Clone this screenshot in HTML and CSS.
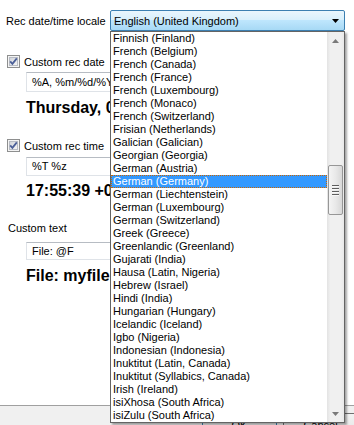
FILE: index.html
```html
<!DOCTYPE html>
<html lang="en">
<head>
    <meta charset="UTF-8">
    <meta name="viewport" content="width=device-width, initial-scale=1.0">
    <title>Recording options</title>
    <link rel="stylesheet" href="styles.css">
</head>
<body>
    <div class="dialog">
        <div class="content">
            <div class="locale-row">
                <span class="label">Rec date/time locale</span>
                <div class="combo">
                    <span class="combo-text">English (United Kingdom)</span>
                    <svg class="combo-arrow" width="7" height="4" viewBox="0 0 7 4"><path d="M0 0H7L3.5 4Z" fill="#000"/></svg>
                </div>
            </div>

            <label class="check-row first">
                <span class="checkbox">
                    <svg width="13" height="13" viewBox="0 0 13 13">
                        <defs>
                            <linearGradient id="cb1" x1="0" y1="0" x2="1" y2="1">
                                <stop offset="0" stop-color="#cfd3d9"/>
                                <stop offset="1" stop-color="#f7f7f7"/>
                            </linearGradient>
                        </defs>
                        <rect x="0.5" y="0.5" width="12" height="12" fill="#f4f4f4" stroke="#8e8f8f"/>
                        <rect x="2.5" y="2.5" width="8" height="8" fill="url(#cb1)" stroke="#b8bcc4"/>
                        <path d="M3.2 6.4L5.4 8.8L9.8 3.4" fill="none" stroke="#4b5f98" stroke-width="1.8"/>
                    </svg>
                </span>
                Custom rec date
            </label>
            <div class="field date-field">%A, %m/%d/%Y</div>
            <div class="preview date-preview">Thursday, 05/18/2017</div>

            <label class="check-row second">
                <span class="checkbox">
                    <svg width="13" height="13" viewBox="0 0 13 13">
                        <defs>
                            <linearGradient id="cb2" x1="0" y1="0" x2="1" y2="1">
                                <stop offset="0" stop-color="#cfd3d9"/>
                                <stop offset="1" stop-color="#f7f7f7"/>
                            </linearGradient>
                        </defs>
                        <rect x="0.5" y="0.5" width="12" height="12" fill="#f4f4f4" stroke="#8e8f8f"/>
                        <rect x="2.5" y="2.5" width="8" height="8" fill="url(#cb2)" stroke="#b8bcc4"/>
                        <path d="M3.2 6.4L5.4 8.8L9.8 3.4" fill="none" stroke="#4b5f98" stroke-width="1.8"/>
                    </svg>
                </span>
                Custom rec time
            </label>
            <div class="field time-field">%T %z</div>
            <div class="preview time-preview">17:55:39 +0100</div>

            <div class="text-label">Custom text</div>
            <div class="field text-field">File: @F</div>
            <div class="preview text-preview">File: myfile.wav</div>
        </div>

        <div class="footer">
            <button class="btn default">OK</button>
            <button class="btn">Cancel</button>
        </div>

        <div class="dropdown">
            <ul class="options">
                <li>Finnish (Finland)</li>
                <li>French (Belgium)</li>
                <li>French (Canada)</li>
                <li>French (France)</li>
                <li>French (Luxembourg)</li>
                <li>French (Monaco)</li>
                <li>French (Switzerland)</li>
                <li>Frisian (Netherlands)</li>
                <li>Galician (Galician)</li>
                <li>Georgian (Georgia)</li>
                <li>German (Austria)</li>
                <li class="selected">German (Germany)</li>
                <li>German (Liechtenstein)</li>
                <li>German (Luxembourg)</li>
                <li>German (Switzerland)</li>
                <li>Greek (Greece)</li>
                <li>Greenlandic (Greenland)</li>
                <li>Gujarati (India)</li>
                <li>Hausa (Latin, Nigeria)</li>
                <li>Hebrew (Israel)</li>
                <li>Hindi (India)</li>
                <li>Hungarian (Hungary)</li>
                <li>Icelandic (Iceland)</li>
                <li>Igbo (Nigeria)</li>
                <li>Indonesian (Indonesia)</li>
                <li>Inuktitut (Latin, Canada)</li>
                <li>Inuktitut (Syllabics, Canada)</li>
                <li>Irish (Ireland)</li>
                <li>isiXhosa (South Africa)</li>
                <li>isiZulu (South Africa)</li>
            </ul>
            <div class="scrollbar">
                <div class="arrow up">
                    <svg width="7" height="4" viewBox="0 0 7 4"><path d="M3.5 0L7 4H0Z" fill="#7a7a7a"/></svg>
                </div>
                <div class="track">
                    <div class="thumb">
                        <span class="grip"></span>
                        <span class="grip"></span>
                        <span class="grip"></span>
                        <span class="grip"></span>
                    </div>
                </div>
                <div class="arrow down">
                    <svg width="7" height="4" viewBox="0 0 7 4"><path d="M0 0H7L3.5 4Z" fill="#7a7a7a"/></svg>
                </div>
            </div>
        </div>
    </div>
</body>
</html>
```

FILE: styles.css
```css
* {
    margin: 0;
    padding: 0;
    box-sizing: border-box;
}

body {
    font-family: 'Liberation Sans', Arial, sans-serif;
    font-size: 11px;
    color: #000;
    background: #fff;
    width: 354px;
    height: 425px;
    overflow: hidden;
}

.dialog {
    position: relative;
    width: 354px;
    height: 425px;
    overflow: hidden;
}

.content {
    height: 405px;
    padding: 10px 0 0 6px;
    background: #fff;
}

/* locale row */
.locale-row {
    display: flex;
    align-items: center;
    height: 21px;
}

.label {
    width: 104px;
}

.combo {
    width: 235px;
    height: 21px;
    display: flex;
    align-items: center;
    justify-content: space-between;
    padding: 0 5px 0 3px;
    border: 1px solid #3c7fb1;
    border-radius: 2px;
    background: linear-gradient(to bottom, #eaf6fd 0%, #d9f0fc 45%, #bee6fd 50%, #a7d9f5 100%);
}

/* checkboxes */
.check-row {
    display: flex;
    align-items: center;
    gap: 4px;
    height: 13px;
    padding-left: 1px;
}

.check-row.first {
    margin-top: 24px;
}

.check-row.second {
    margin-top: 22px;
}

.checkbox {
    display: block;
    width: 13px;
    height: 13px;
}

.checkbox svg {
    display: block;
}

/* text fields */
.field {
    margin-left: 20px;
    width: 319px;
    height: 20px;
    line-height: 18px;
    padding-left: 5px;
    border: 1px solid #dfe3e8;
    border-top-color: #b7bcc3;
    white-space: nowrap;
    overflow: hidden;
}

.date-field {
    margin-top: 4px;
}

.time-field {
    margin-top: 5px;
    height: 19px;
    line-height: 17px;
}

.text-label {
    margin-top: 22px;
    padding-left: 2px;
    height: 13px;
    line-height: 13px;
}

.text-field {
    margin-top: 7px;
    height: 18px;
    line-height: 16px;
}

.preview {
    margin-left: 20px;
    font-size: 16px;
    font-weight: bold;
    line-height: 19px;
    height: 19px;
    white-space: nowrap;
}

.date-preview {
    margin-top: 6px;
}

.time-preview {
    margin-top: 5px;
}

.text-preview {
    margin-top: 6px;
}

/* footer */
.footer {
    height: 20px;
    border-top: 1px solid #a0a0a0;
    background: #f0f0f0;
    display: flex;
    justify-content: flex-end;
    gap: 6px;
    padding: 7px 0 0 0;
    margin-right: -4px;
}

.btn {
    width: 75px;
    height: 23px;
    font-family: inherit;
    font-size: 11px;
    border: 1px solid #707070;
    border-radius: 3px;
    background: linear-gradient(to bottom, #f2f2f2 0%, #ebebeb 50%, #dddddd 51%, #cfcfcf 100%);
}

.btn.default {
    border-color: #3c7fb1;
}

/* open dropdown list (overlays the form) */
.dropdown {
    position: absolute;
    left: 110px;
    top: 31px;
    width: 235px;
    height: 392px;
    display: flex;
    border: 1px solid #646464;
    background: #fff;
    box-shadow: 2px 2px 2px rgba(0, 0, 0, 0.35);
}

.options {
    list-style: none;
    flex: 1;
    overflow: hidden;
}

.options li {
    height: 13px;
    line-height: 13px;
    padding-left: 2px;
    white-space: nowrap;
}

.options li.selected {
    background: #3399ff;
    color: #fff;
    outline: 1px dotted #cc6600;
    outline-offset: -1px;
}

.scrollbar {
    width: 17px;
    display: flex;
    flex-direction: column;
    background: linear-gradient(to right, #e3e3e3 0%, #f0f0f0 20%, #f0f0f0 80%, #e9e9e9 100%);
}

.arrow {
    height: 17px;
    display: flex;
    align-items: center;
    justify-content: center;
}

.track {
    flex: 1;
    padding-top: 116px;
}

.thumb {
    width: 15px;
    height: 50px;
    margin-left: 1px;
    border: 1px solid #979797;
    border-radius: 2px;
    background: linear-gradient(to right, #f4f4f4 0%, #e9e9e9 50%, #d8d8d8 100%);
    display: flex;
    flex-direction: column;
    align-items: center;
    justify-content: center;
    gap: 1px;
}

.grip {
    display: block;
    width: 7px;
    height: 2px;
    border-top: 1px solid #5e5e5e;
    border-bottom: 1px solid #f8f8f8;
}
```
